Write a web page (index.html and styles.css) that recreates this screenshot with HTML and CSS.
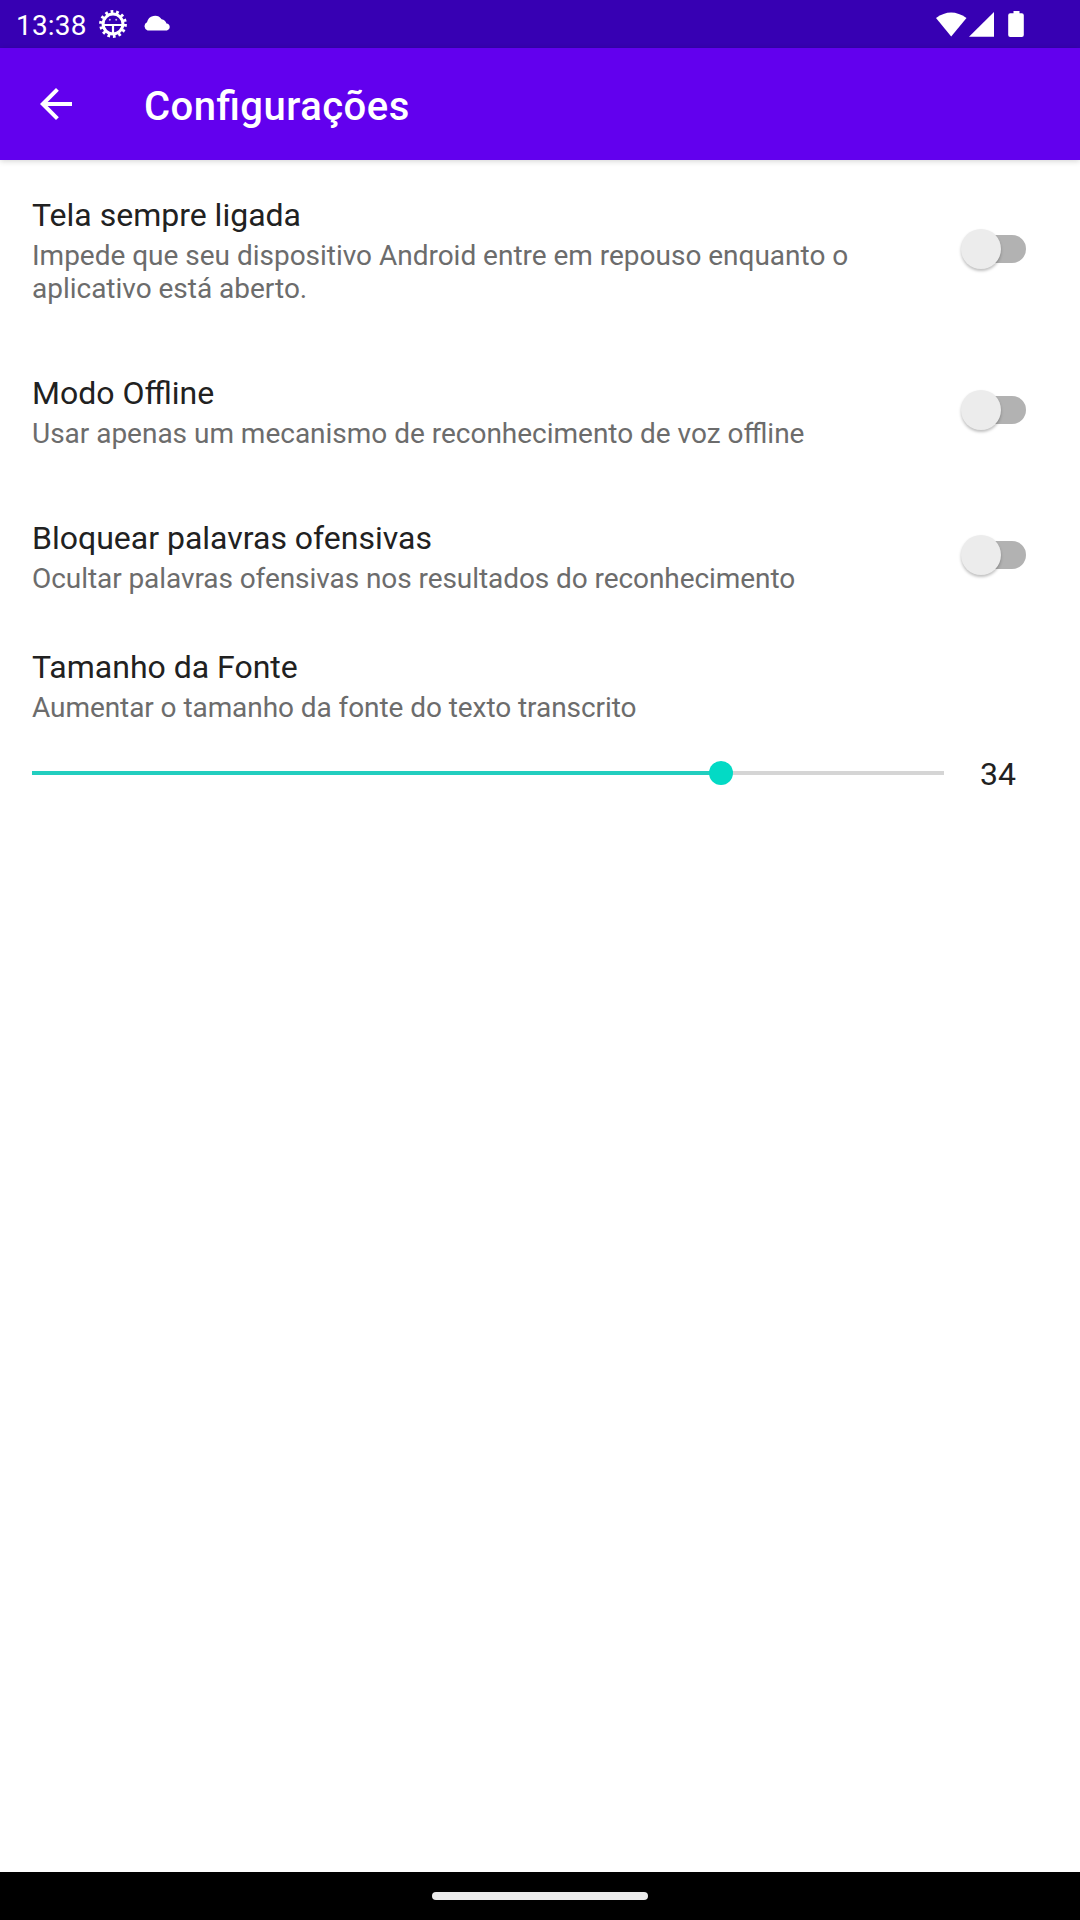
FILE: index.html
```html
<!DOCTYPE html>
<html lang="pt-BR">
<head>
<meta charset="utf-8">
<title>Configurações</title>
<link rel="stylesheet" href="styles.css">
</head>
<body>
<div class="status-bar">
  <span class="clock">13:38</span>
  <svg class="gear" width="28" height="28" viewBox="0 0 28 28">
    <circle cx="14" cy="14" r="12.300" fill="none" stroke="#fff" stroke-width="3.200" stroke-dasharray="2.700 2.820"/>
    <circle cx="14" cy="14" r="9.900" fill="none" stroke="#fff" stroke-width="3"/>
    <path d="M5 15h18M14 15v8" fill="none" stroke="#fff" stroke-width="2.200"/>
    <circle cx="10.800" cy="9.800" r="1" fill="#fff" fill-opacity=".7"/>
    <circle cx="17.200" cy="9.800" r="1" fill="#fff" fill-opacity=".7"/>
  </svg>
  <svg class="cloud" width="28" height="17" viewBox="0 0 28 17"><path d="M4.600 15.500A4.500 4.500 0 0 1 4 7.200A8.200 8.200 0 0 1 18.600 4.200A6 6 0 0 1 23.500 8.600A3.500 3.500 0 0 1 24 15.500z" fill="#fff"/></svg>
  <svg class="signals" width="90" height="28" viewBox="0 0 90 28">
    <path d="M0 7Q15-4 30.500 7L15.200 25.500z" fill="#fff"/>
    <path d="M33 25.700L58 1v24.700z" fill="#fff"/>
    <path d="M77.500 0h6v2.300h2.300a2 2 0 0 1 2 2V24a2 2 0 0 1-2 2H74.200a2 2 0 0 1-2-2V4.300a2 2 0 0 1 2-2h3.300z" fill="#fff"/>
  </svg>
</div>
<header class="app-bar">
  <svg class="back" width="48" height="48" viewBox="0 0 24 24"><path d="M20 11H7.830l5.590-5.590L12 4l-8 8 8 8 1.410-1.410L7.830 13H20v-2z" fill="#fff"/></svg>
  <h1 class="app-title">Configurações</h1>
</header>
<main class="settings">
  <section class="item item-tall">
    <div class="item-text">
      <h2 class="item-title">Tela sempre ligada</h2>
      <p class="summary">Impede que seu dispositivo Android entre em repouso enquanto o aplicativo está aberto.</p>
    </div>
    <div class="switch"><span class="thumb"></span></div>
  </section>
  <section class="item">
    <div class="item-text">
      <h2 class="item-title">Modo Offline</h2>
      <p class="summary">Usar apenas um mecanismo de reconhecimento de voz offline</p>
    </div>
    <div class="switch"><span class="thumb"></span></div>
  </section>
  <section class="item">
    <div class="item-text">
      <h2 class="item-title">Bloquear palavras ofensivas</h2>
      <p class="summary summary-tight">Ocultar palavras ofensivas nos resultados do reconhecimento</p>
    </div>
    <div class="switch"><span class="thumb"></span></div>
  </section>
  <section class="font-size">
    <h2 class="item-title">Tamanho da Fonte</h2>
    <p class="summary summary-tight">Aumentar o tamanho da fonte do texto transcrito</p>
    <div class="slider-row">
      <div class="slider">
        <div class="slider-fill" style="width: 689px"></div>
        <span class="slider-thumb"></span>
        <div class="slider-rest"></div>
      </div>
      <span class="value">34</span>
    </div>
  </section>
</main>
<footer class="nav-bar"><span class="handle"></span></footer>
</body>
</html>
```

FILE: styles.css
```css
* {
  box-sizing: border-box;
  margin: 0;
  padding: 0;
}

body {
  display: flex;
  flex-direction: column;
  height: 1920px;
  background: #fff;
  color: #212121;
  font-family: Roboto, "Liberation Sans", sans-serif;
}

svg {
  display: block;
  flex: none;
}

.status-bar {
  display: flex;
  height: 48px;
  padding-left: 16px;
  background: #3700b3;
  color: #fff;
}

.clock {
  width: 83px;
  padding-top: 9px;
  font-size: 28px;
  line-height: 33px;
  letter-spacing: .2px;
}

.gear {
  margin-top: 10px;
}

.cloud {
  margin: 15px 0 0 16px;
}

.signals {
  margin: 11px 54px 0 auto;
}

.app-bar {
  display: flex;
  align-items: center;
  height: 112px;
  padding-left: 32px;
  background: #6200ee;
  color: #fff;
  box-shadow: 0 1px 6px rgba(0, 0, 0, .18);
}

.app-title {
  margin: 4px 0 0 64px;
  font-size: 40px;
  font-weight: 500;
  line-height: 47px;
  letter-spacing: .48px;
  font-feature-settings: "liga" 1;
}

.settings {
  flex: 1;
}

.item {
  display: flex;
  align-items: center;
  height: 145px;
  padding: 0 54px 0 32px;
}

.item-tall {
  height: 178px;
}

.item-text {
  width: 840px;
  padding-top: 3px;
}

.item-title {
  font-size: 32px;
  font-weight: 400;
  line-height: 38px;
}

.summary {
  margin-top: 5px;
  color: #6c6c6c;
  font-size: 28px;
  line-height: 33px;
  letter-spacing: -.015px;
  font-feature-settings: "liga" 1;
}

.summary-tight {
  letter-spacing: -.07px;
}

.switch {
  display: flex;
  align-items: center;
  width: 60px;
  height: 28px;
  margin-left: auto;
  border-radius: 14px;
  background: #b2b2b2;
}

.item:not(.item-tall) .switch {
  margin-bottom: 2px;
}

.thumb {
  width: 40px;
  height: 40px;
  margin-left: -5px;
  border-radius: 50%;
  background: #ececec;
  box-shadow: 0 2px 3px rgba(0, 0, 0, .25);
}

.font-size {
  padding: 20px 0 0 32px;
}

.slider-row {
  display: flex;
  align-items: center;
  height: 60px;
  margin-top: 19px;
}

.slider {
  display: flex;
  align-items: center;
  width: 912px;
}

.slider-fill {
  height: 4px;
  background: #22cebf;
}

.slider-thumb {
  z-index: 1;
  width: 24px;
  height: 24px;
  margin: 0 -12px;
  border-radius: 50%;
  background: #03dac5;
}

.slider-rest {
  flex: 1;
  height: 4px;
  background: #d5d5d5;
}

.value {
  margin: 2px 0 0 36px;
  font-size: 32px;
  line-height: 38px;
}

.nav-bar {
  display: flex;
  align-items: center;
  justify-content: center;
  height: 48px;
  background: #000;
}

.handle {
  width: 216px;
  height: 8px;
  border-radius: 4px;
  background: #ebebeb;
}
```
